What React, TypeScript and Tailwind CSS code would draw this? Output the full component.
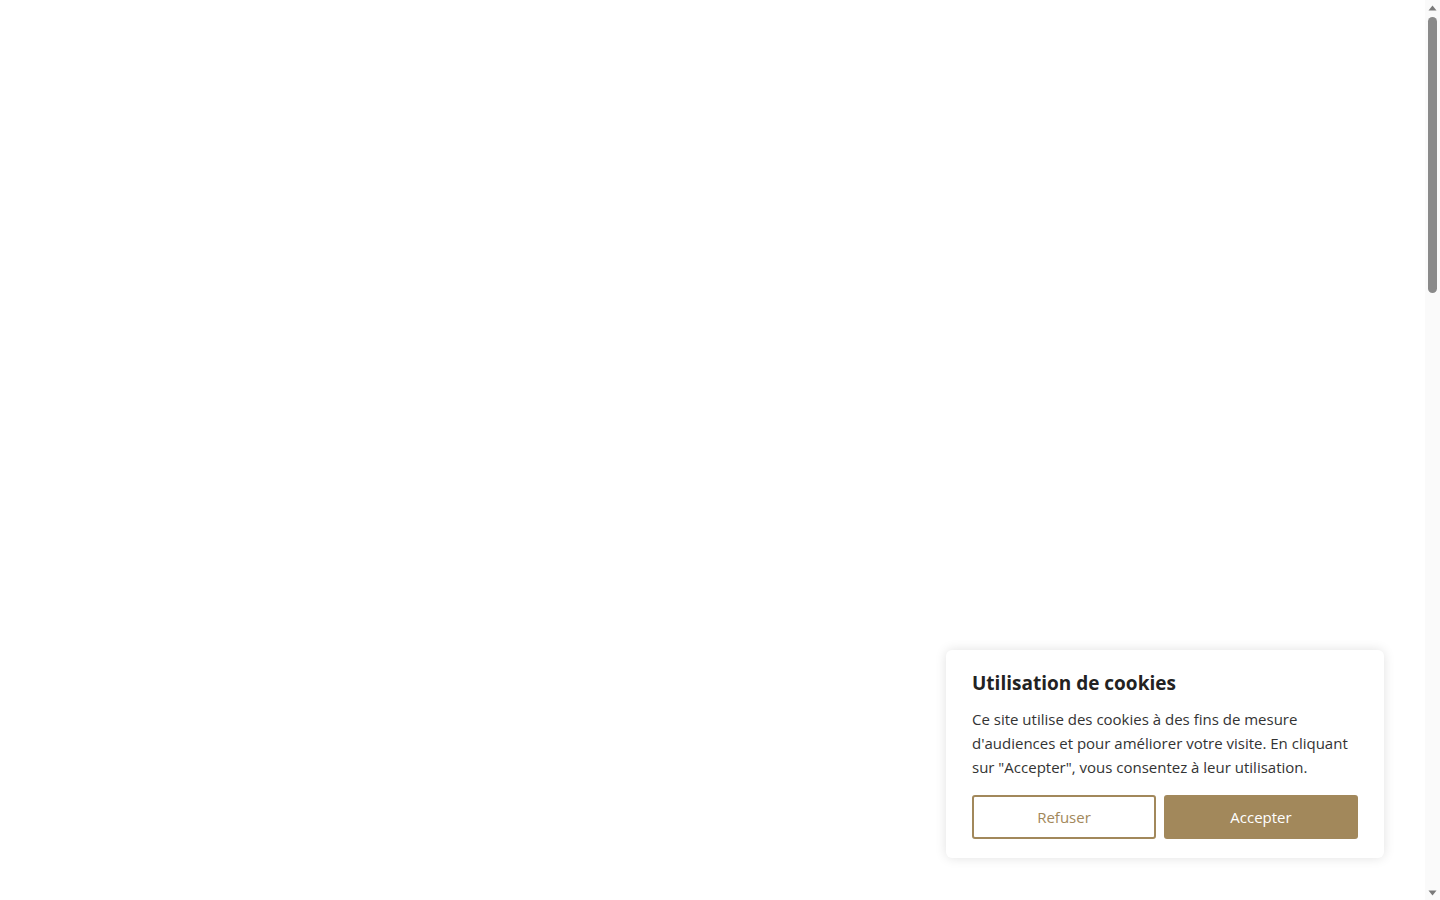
export default function App() {
  return (
    <div className="flex h-screen w-full overflow-hidden bg-white">
      <main className="relative flex-1">
        <div
          className="absolute bottom-[42px] right-[41px] w-[438px] rounded-md bg-white px-[26px] pb-[19px] pt-[21px] shadow-[0_0_12px_rgba(0,0,0,0.12)]"
          style={{ fontFamily: '"Open Sans", "Liberation Sans", sans-serif' }}
        >
          <h2 className="text-[19px] font-bold leading-[24px] text-[#222222]">Utilisation de cookies</h2>
          <p className="mt-[12px] text-[15px] leading-[24px] text-[#333333]">
            Ce site utilise des cookies à des fins de mesure d'audiences et pour améliorer votre visite. En cliquant sur
            "Accepter", vous consentez à leur utilisation.
          </p>
          <div className="mt-[16px] flex gap-2">
            <button className="h-[44px] w-[184px] rounded-[3px] border-2 border-[#a2885b] bg-white text-[15px] text-[#a2885b]">
              Refuser
            </button>
            <button className="h-[44px] flex-1 rounded-[3px] bg-[#a2885b] text-[15px] text-white">Accepter</button>
          </div>
        </div>
      </main>
      <div className="flex w-[15px] flex-col items-center bg-[#fafafa]">
        <div className="flex h-[15px] w-full items-center justify-center">
          <svg width="9" height="6" viewBox="0 0 9 6">
            <path d="M4.5 0.5 L8.5 5.5 L0.5 5.5 Z" fill="#7a7a7a" />
          </svg>
        </div>
        <div className="mt-[2px] h-[276px] w-[9px] rounded-full bg-[#8a8a8a]" />
        <div className="flex-1" />
        <div className="flex h-[15px] w-full items-center justify-center">
          <svg width="9" height="6" viewBox="0 0 9 6">
            <path d="M0.5 0.5 L8.5 0.5 L4.5 5.5 Z" fill="#7a7a7a" />
          </svg>
        </div>
      </div>
    </div>
  );
}
